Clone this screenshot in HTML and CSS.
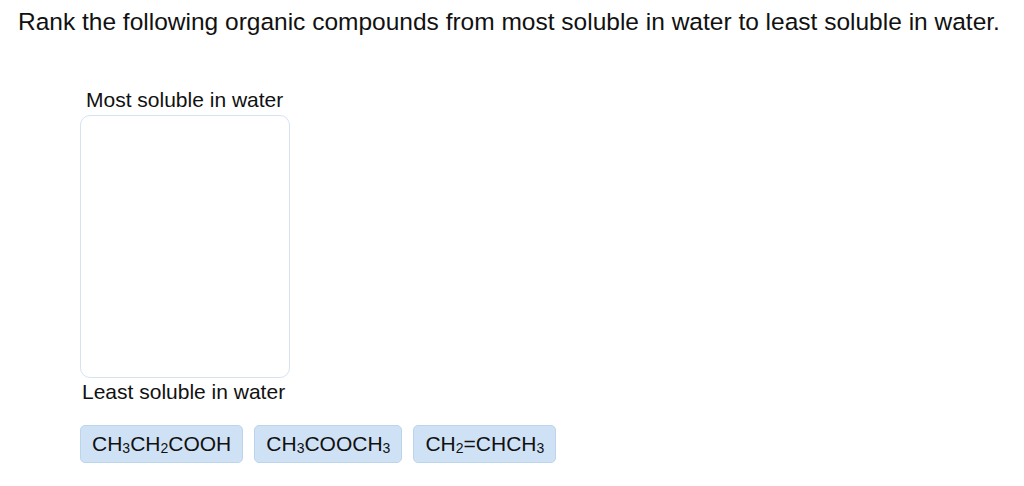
FILE: index.html
```html
<!DOCTYPE html>
<html lang="en">
<head>
  <meta charset="UTF-8" />
  <title>Ranking</title>
  <link rel="stylesheet" href="styles.css">
</head>
<body>
  <p class="prompt">Rank the following organic compounds from most soluble in water to least soluble in water.</p>

  <div class="ranking">
    <div class="label top">Most soluble in water</div>
    <div class="dropzone"></div>
    <div class="label bottom">Least soluble in water</div>

    <div class="choices">
      <span class="chip">CH<sub>3</sub>CH<sub>2</sub>COOH</span>
      <span class="chip">CH<sub>3</sub>COOCH<sub>3</sub></span>
      <span class="chip">CH<sub>2</sub>=CHCH<sub>3</sub></span>
    </div>
  </div>
</body>
</html>
```

FILE: styles.css
```css
body {
  margin: 0;
  font-family: 'Liberation Sans', Arial, sans-serif;
  color: #111;
  background: #fff;
}

.prompt {
  margin: 0;
  padding: 8px 0 0 18px;
  font-size: 24.5px;
  line-height: 28px;
}

.ranking {
  padding: 52px 0 0 80px;
}

.label {
  font-size: 21px;
  line-height: 24px;
}

.label.top {
  padding-left: 6px;
  margin-bottom: 3px;
}

.label.bottom {
  padding-left: 2px;
  margin-top: 2px;
}

.dropzone {
  width: 208px;
  height: 261px;
  border: 1px solid #d5e3f1;
  border-radius: 10px;
}

.choices {
  display: flex;
  gap: 11px;
  margin-top: 21px;
}

.chip {
  display: inline-block;
  height: 36px;
  line-height: 36px;
  padding: 0 11px;
  background: #cfe2f5;
  border: 1px solid #bdd5ec;
  border-radius: 5px;
  font-size: 21px;
  white-space: nowrap;
}

.chip sub {
  font-size: 14px;
  vertical-align: -2px;
  line-height: 0;
}
```
